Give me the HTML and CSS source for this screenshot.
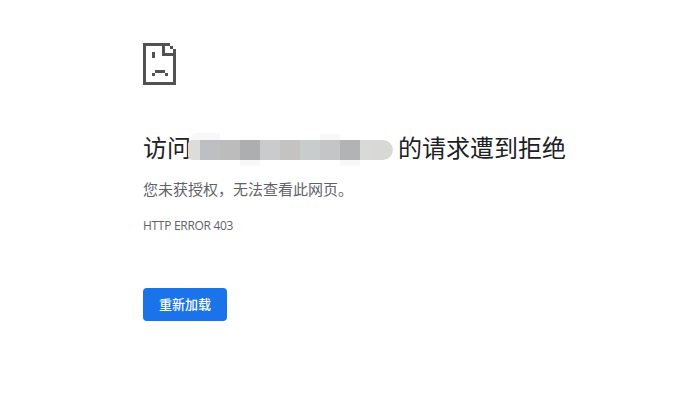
FILE: index.html
```html
<!DOCTYPE html>
<html lang="zh">
<head>
  <meta charset="UTF-8">
  <title>403</title>
  <link rel="stylesheet" href="styles.css">
</head>
<body>
  <div class="interstitial">
    <svg class="icon" width="33" height="42" viewBox="0 0 33 42" shape-rendering="crispEdges" fill="#525252">
      <path d="M0 0H27V3H3V39H30V6H33V42H0Z"/>
      <path d="M19 3H22V10H30V13H19Z"/>
      <path d="M27 3H30V6H27Z"/>
      <path d="M9 9H12V15H9Z"/>
      <path d="M12 27H22V30H12ZM9 30H12V33H9ZM22 30H25V33H22Z"/>
    </svg>
    <h1 class="heading">
      <span>访问</span>
      <span class="masked">
        <i class="b1"></i><i class="b2"></i><i class="b3"></i><i class="b4"></i><i class="b5"></i><i class="b6"></i><i class="b7"></i><i class="b8"></i><i class="b9"></i><i class="b10"></i>
        <b class="bump bump-a"></b><b class="bump bump-b"></b><b class="bump bump-c"></b><b class="bump bump-d"></b>
      </span>
      <span>的请求遭到拒绝</span>
    </h1>
    <p class="summary">您未获授权，无法查看此网页。</p>
    <div class="error-code">HTTP ERROR 403</div>
    <button class="reload" type="button">重新加载</button>
  </div>
</body>
</html>
```

FILE: styles.css
```css
body {
  margin: 0;
  background: #fff;
  color: #5f6368;
  font-family: "Open Sans", "Noto Sans CJK SC", sans-serif;
}
.interstitial {
  display: flex;
  flex-direction: column;
  align-items: flex-start;
  padding: 43px 0 0 143px;
}
.icon {
  display: block;
}
.heading {
  display: flex;
  align-items: center;
  margin: 43px 0 0;
  height: 36px;
  color: #202124;
  font-family: "Noto Sans CJK SC", sans-serif;
  font-size: 24px;
  font-weight: 400;
  white-space: nowrap;
}
.masked {
  position: relative;
  display: flex;
  width: 205px;
  height: 20px;
  margin: 8px 5px 0 -3px;
  background: #d8d8d6;
  border-radius: 5px 10px 10px 5px;
}
.masked i {
  flex: none;
  width: 20px;
  height: 20px;
}
.masked .b1 { width: 12px; background: #dcdcda; border-radius: 5px 0 0 5px; }
.b2 { background: #bebfc2; }
.b3 { background: #bcbcbc; }
.b4 { background: #adaeb0; }
.b5 { background: #c9cbcd; }
.b6 { background: #c4c3c1; }
.b7 { background: #c8cccd; }
.b8 { background: #c4c5c7; }
.b9 { background: #b2b3b5; }
.masked .b10 { width: 13px; background: #d9d9d7; border-radius: 0 10px 10px 0; }
/* faint blur spill above and below the mask */
.bump {
  position: absolute;
  width: 20px;
  height: 6px;
  background: #f8f8f8;
}
.bump-a { left: 2px; top: -7px; width: 30px; height: 7px; border-radius: 8px 0 0 0; }
.bump-b { left: 132px; top: -6px; }
.bump-c { left: 52px; bottom: -6px; }
.bump-d { left: 152px; bottom: -6px; }
.summary {
  margin: 15px 0 0;
  font-size: 15px;
  line-height: 20px;
}
.error-code {
  margin-top: 19px;
  font-size: 12px;
  letter-spacing: -0.3px;
  line-height: 16px;
}
.reload {
  margin-top: 54px;
  width: 84px;
  height: 33px;
  padding: 0 0 2px;
  border: 0;
  border-radius: 4px;
  background: #1a73e8;
  color: #fff;
  font-family: inherit;
  font-size: 13px;
  font-weight: 500;
}
```
